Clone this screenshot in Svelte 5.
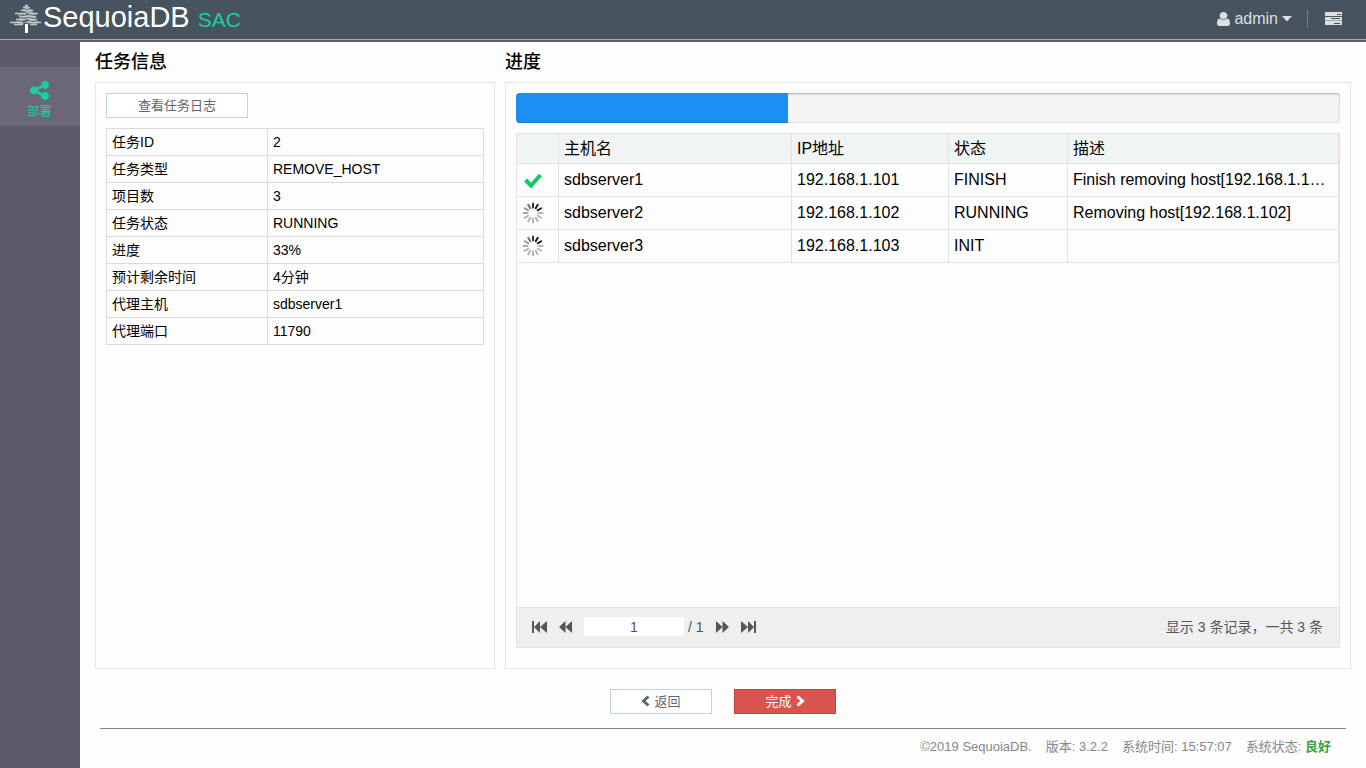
<script lang="ts">
	const task = [
		{ label: '任务ID', value: '2' },
		{ label: '任务类型', value: 'REMOVE_HOST' },
		{ label: '项目数', value: '3' },
		{ label: '任务状态', value: 'RUNNING' },
		{ label: '进度', value: '33%' },
		{ label: '预计剩余时间', value: '4分钟' },
		{ label: '代理主机', value: 'sdbserver1' },
		{ label: '代理端口', value: '11790' }
	];

	let hosts = $state([
		{ name: 'sdbserver1', ip: '192.168.1.101', status: 'FINISH', desc: 'Finish removing host[192.168.1.101]' },
		{ name: 'sdbserver2', ip: '192.168.1.102', status: 'RUNNING', desc: 'Removing host[192.168.1.102]' },
		{ name: 'sdbserver3', ip: '192.168.1.103', status: 'INIT', desc: '' }
	]);

	let progress = $state(33);
	let page = $state('1');

	// spinner spokes, clockwise from the top
	const spokes = [0.85, 0.95, 1, 0.3, 0.3, 0.3, 0.3, 0.3, 0.32, 0.36, 0.45, 0.6];
</script>

<svelte:head>
	<title>SequoiaDB SAC</title>
</svelte:head>

<div class="app">
	<header class="topbar">
		<a class="brand" href="#/">
			<svg class="tree" viewBox="0 0 32 30" aria-hidden="true">
				<g stroke="#c0c5c8" fill="none">
					<path d="M15 1.500h3M13 3.500h7M11 6.500h12M5 9.500h11M18 9.500h10M9 12.500h17M6 15.500h10M18 15.500h9M0 18.500h13M17 18.500h14M4 20.500h9M20 20.500h7" stroke-width="1.400" />
					<path d="M18 1.500l-5 2M20 3.500l-9 3M15 4l8 2.500M23 6.500L8 11.500M15 7l10 2.500M26 9.500L9 15M14 10.500l12 3M26 12.500L5 18.500M16 14l13 4M25 15.500L8 20.500M20 17l6 3.500" stroke-width="0.800" />
				</g>
				<path d="M15 20h3v9h-3z" fill="#fff" />
			</svg>
			<span class="brand-name">SequoiaDB</span>
			<span class="brand-sub">SAC</span>
		</a>
		<div class="tools">
			<button class="tool" type="button">
				<svg class="user" viewBox="256 128 1280 1536" preserveAspectRatio="none" aria-hidden="true">
					<path d="M1536 1399q0 109-62.500 187t-150.500 78h-854q-88 0-150.500-78t-62.500-187q0-85 8.500-160.500t31.500-152 58.500-131 94-89 134.500-34.500q131 128 313 128t313-128q76 0 134.500 34.500t94 89 58.500 131 31.500 152 8.500 160.500zm-256-887q0 159-112.500 271.500t-271.500 112.500-271.500-112.500-112.500-271.500 112.500-271.500 271.500-112.500 271.500 112.500 112.500 271.500z" />
				</svg>
				<span>admin</span>
				<svg class="caret" viewBox="0 0 10 6" aria-hidden="true"><path d="M0 0h10L5 5.500z" /></svg>
			</button>
			<span class="split"></span>
			<button class="tool" type="button" aria-label="任务">
				<svg class="tasks" viewBox="0 0 17 13" aria-hidden="true">
					<path d="M0 0h17v4H0zM0 5h17v3H0zM0 9h17v4H0z" />
					<path d="M0 8h17v1H0z" opacity="0.600" />
					<path d="M12 2.500h4M6 6.500h9M9 11.500h6" stroke="#47535f" />
				</svg>
			</button>
		</div>
	</header>

	<div class="body">
		<nav class="sidebar">
			<a class="nav-item" href="#/deploy">
				<svg class="share" viewBox="128 128 1536 1536" aria-hidden="true">
					<path d="M1344 1024q133 0 226.500 93.500t93.500 226.500-93.500 226.500-226.500 93.500-226.500-93.500-93.500-226.500q0-12 2-34l-360-180q-92 86-218 86-133 0-226.500-93.500t-93.500-226.500 93.500-226.500 226.500-93.500q126 0 218 86l360-180q-2-22-2-34 0-133 93.500-226.500t226.500-93.500 226.500 93.500 93.500 226.500-93.500 226.500-226.500 93.500q-126 0-218-86l-360 180q2 22 2 34t-2 34l360 180q92-86 218-86z" />
				</svg>
				<span>部署</span>
			</a>
		</nav>

		<main class="content">
			<div class="columns">
				<section class="column info">
					<h2>任务信息</h2>
					<div class="panel">
						<button class="btn wide" type="button">查看任务日志</button>
						<table class="info-table">
							<tbody>
								{#each task as row}
									<tr>
										<th scope="row">{row.label}</th>
										<td>{row.value}</td>
									</tr>
								{/each}
							</tbody>
						</table>
					</div>
				</section>

				<section class="column">
					<h2>进度</h2>
					<div class="panel">
						<div class="progress" role="progressbar" aria-label="进度" aria-valuenow={progress} aria-valuemin="0" aria-valuemax="100">
							<div class="progress-bar" style="width: {progress}%"></div>
						</div>

						<div class="grid">
							<div class="grid-body">
								<table class="hosts">
									<colgroup>
										<col class="c-icon" />
										<col class="c-name" />
										<col class="c-ip" />
										<col class="c-status" />
										<col />
									</colgroup>
									<thead>
										<tr>
											<th></th>
											<th>主机名</th>
											<th>IP地址</th>
											<th>状态</th>
											<th>描述</th>
										</tr>
									</thead>
									<tbody>
										{#each hosts as host}
											<tr>
												<td>
													{#if host.status === 'FINISH'}
														<svg class="check" viewBox="0 0 22 22" aria-hidden="true">
															<path d="M3.500 11l5.500 5.500L18.500 6" />
														</svg>
													{:else}
														<svg class="spinner" viewBox="-11 -11 22 22" aria-hidden="true">
															{#each spokes as shade, i}
																<path d="M0-9.500v4" opacity={shade} transform="rotate({i * 30})" />
															{/each}
														</svg>
													{/if}
												</td>
												<td>{host.name}</td>
												<td>{host.ip}</td>
												<td>{host.status}</td>
												<td class="desc">{host.desc}</td>
											</tr>
										{/each}
									</tbody>
								</table>
							</div>

							<div class="pager">
								<div class="pages">
									<button type="button" aria-label="首页">
										<svg viewBox="0 0 15 12" aria-hidden="true"><path d="M0 0h2v12H0zM8 0v12L2 6zM15 0v12L8 6z" /></svg>
									</button>
									<button type="button" aria-label="上一页">
										<svg class="narrow" viewBox="0 0 13 12" aria-hidden="true"><path d="M6.500 0v12L0 6zM13 0v12L6.500 6z" /></svg>
									</button>
									<input type="text" aria-label="页码" bind:value={page} />
									<span>/ 1</span>
									<button type="button" aria-label="下一页">
										<svg class="narrow" viewBox="0 0 13 12" aria-hidden="true"><path d="M0 0v12l6.500-6zM6.500 0v12L13 6z" /></svg>
									</button>
									<button type="button" aria-label="末页">
										<svg viewBox="0 0 15 12" aria-hidden="true"><path d="M13 0h2v12h-2zM0 0v12l7-6zM7 0v12l6-6z" /></svg>
									</button>
								</div>
								<span>显示 {hosts.length} 条记录，一共 {hosts.length} 条</span>
							</div>
						</div>
					</div>
				</section>
			</div>

			<div class="actions">
				<button class="btn" type="button">
					<svg class="chevron" viewBox="0 0 9 12" aria-hidden="true"><path d="M7.500 1.500L2.500 6l5 4.500" /></svg>
					<span>返回</span>
				</button>
				<button class="btn danger" type="button">
					<span>完成</span>
					<svg class="chevron" viewBox="0 0 9 12" aria-hidden="true"><path d="M1.500 1.500l5 4.500-5 4.500" /></svg>
				</button>
			</div>

			<footer class="footer">
				<span>©2019 SequoiaDB.</span>
				<span>版本: 3.2.2</span>
				<span>系统时间: 15:57:07</span>
				<span>系统状态: <b>良好</b></span>
			</footer>
		</main>
	</div>
</div>

<style>
	:global(body) {
		margin: 0;
		background: #fdfdfd;
	}

	.app {
		display: flex;
		flex-direction: column;
		min-height: 100vh;
		font-family: 'Liberation Sans', 'Noto Sans CJK SC', sans-serif;
		font-size: 14px;
		color: #000;
	}

	.app * {
		box-sizing: border-box;
	}

	a {
		text-decoration: none;
	}

	button,
	input {
		font-family: inherit;
	}

	svg {
		display: block;
		flex: none;
		fill: currentColor;
	}

	h2 {
		margin: 0;
		padding: 8px 0;
		font-size: 18px;
		font-weight: 500;
		line-height: 24px;
	}

	table {
		width: 100%;
		border-collapse: collapse;
		table-layout: fixed;
	}

	th {
		font-weight: 400;
		text-align: left;
	}

	/* top bar */
	.topbar {
		display: flex;
		justify-content: space-between;
		height: 42px;
		padding: 0 16px 0 10px;
		background: linear-gradient(#47535f 39px, #a9a8b0 39px, #a9a8b0 40px, #5d5a6a 40px);
	}

	.brand {
		display: flex;
		align-items: baseline;
		line-height: 34px;
		color: #fff;
	}

	.tree {
		width: 32px;
		height: 30px;
		margin: 4px 1px 0 0;
		align-self: flex-start;
	}

	.brand-name {
		font-size: 29px;
	}

	.brand-sub {
		margin-left: 8px;
		font-size: 21px;
		color: #17d1a1;
	}

	.tools {
		display: flex;
		align-items: center;
		height: 37px;
	}

	.tool {
		display: flex;
		align-items: center;
		gap: 4px;
		padding: 0 8px;
		border: 0;
		background: none;
		font-size: 16px;
		line-height: 20px;
		color: #dcdfe1;
	}

	.user {
		width: 13px;
		height: 14px;
	}

	.caret {
		width: 10px;
		height: 6px;
	}

	.split {
		width: 1px;
		height: 18px;
		margin: 0 9px 0 7px;
		background: #777f88;
	}

	.tasks {
		width: 17px;
		height: 13px;
	}

	/* side menu */
	.body {
		display: flex;
		flex: 1;
	}

	.sidebar {
		flex: none;
		width: 80px;
		padding-top: 25px;
		background: #5d5a6a;
	}

	.nav-item {
		display: flex;
		flex-direction: column;
		align-items: center;
		gap: 3px;
		height: 59px;
		padding: 14px 1px 0 0;
		background: #6a6778;
		font-size: 12px;
		line-height: 18px;
		color: #17d1a1;
	}

	.share {
		width: 19px;
		height: 19px;
	}

	/* content */
	.content {
		display: flex;
		flex: 1;
		flex-direction: column;
		min-width: 0;
		padding: 0 15px;
	}

	.columns {
		display: flex;
		flex: 1;
		gap: 10px;
	}

	.column {
		display: flex;
		flex: 1;
		flex-direction: column;
		min-width: 0;
	}

	.column.info {
		flex: none;
		width: 400px;
	}

	.panel {
		display: flex;
		flex: 1;
		flex-direction: column;
		gap: 10px;
		padding: 10px 10px 20px;
		border: 1px solid #e3e7e8;
	}

	.btn {
		display: flex;
		align-items: center;
		justify-content: center;
		gap: 4px;
		width: 102px;
		height: 25px;
		padding: 0 0 2px;
		border: 1px solid #c4d0db;
		background: #fff;
		font-size: 13px;
		color: #5f666c;
	}

	.btn.wide {
		width: 142px;
	}

	.btn.danger {
		border-color: #ce4040;
		background: #d9534f;
		color: #fff;
	}

	.chevron {
		width: 9px;
		height: 12px;
		fill: none;
		stroke: currentColor;
		stroke-width: 3;
	}

	.info-table th,
	.info-table td {
		height: 27px;
		padding: 0 5px;
		border: 1px solid #d9dadb;
		line-height: 20px;
	}

	.info-table th {
		width: 161px;
	}

	.progress {
		height: 30px;
		overflow: hidden;
		border-radius: 4px;
		background: #f4f4f4;
		box-shadow:
			inset 0 1px 2px rgba(0, 0, 0, 0.3),
			inset 0 -1px 0 #e8e8e8;
	}

	.progress-bar {
		height: 100%;
		background: #1b8ff2;
		box-shadow: inset 0 -1px 0 #1579cf;
	}

	/* host list */
	.grid {
		display: flex;
		flex: 1;
		flex-direction: column;
		border: 1px solid #e0e4e5;
	}

	.grid-body {
		flex: 1;
	}

	.hosts {
		border-collapse: separate;
		border-spacing: 0;
		font-size: 16px;
		line-height: 20px;
	}

	.c-icon {
		width: 42px;
	}

	.c-name {
		width: 233px;
	}

	.c-ip {
		width: 157px;
	}

	.c-status {
		width: 119px;
	}

	.hosts th,
	.hosts td {
		height: 33px;
		padding: 0 5px;
		border-right: 1px solid #e0e4e5;
		border-bottom: 1px solid #e0e4e5;
	}

	.hosts th {
		height: 30px;
		background: #f0f4f5;
	}

	.hosts .desc {
		padding-right: 10px;
		overflow: hidden;
		text-overflow: ellipsis;
		white-space: nowrap;
	}

	.check,
	.spinner {
		width: 22px;
		height: 22px;
		fill: none;
	}

	.check {
		stroke: #0ccb62;
		stroke-width: 4;
	}

	.spinner {
		stroke: #111;
		stroke-width: 2;
		stroke-linecap: round;
	}

	.pager {
		display: flex;
		align-items: center;
		justify-content: space-between;
		height: 40px;
		padding: 0 16px 2px 15px;
		border-top: 1px solid #e0e4e5;
		background: #efefef;
		line-height: 20px;
		color: #555;
	}

	.pages {
		display: flex;
		align-items: center;
		gap: 12px;
	}

	.pages button {
		padding: 0;
		border: 0;
		background: none;
		color: #555;
	}

	.pages svg {
		width: 15px;
		height: 12px;
	}

	.pages svg.narrow {
		width: 13px;
	}

	.pages input {
		width: 100px;
		height: 19px;
		margin-right: -8px;
		padding: 0;
		border: 0;
		background: #fff;
		font-size: 14px;
		text-align: center;
		color: #555;
	}

	.actions {
		display: flex;
		justify-content: center;
		gap: 22px;
		padding: 20px 0 14px;
	}

	.footer {
		display: flex;
		justify-content: flex-end;
		gap: 14px;
		margin: 0 5px;
		padding: 7px 15px 11px;
		border-top: 1px solid #858585;
		font-size: 13px;
		line-height: 21px;
		color: #888;
	}

	.footer b {
		color: #43a047;
	}
</style>
